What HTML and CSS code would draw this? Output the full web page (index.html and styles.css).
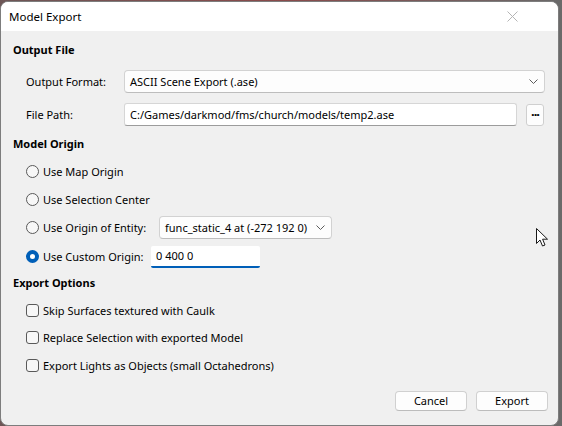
FILE: index.html
```html
<!DOCTYPE html>
<html>
<head>
<meta charset="utf-8">
<link rel="stylesheet" href="styles.css">
</head>
<body>
<div class="window">
  <div class="titlebar">
    <span class="title">Model Export</span>
    <svg class="close" width="11" height="11" viewBox="0 0 11 11"><path d="M0.5 0.5 L10.5 10.5 M10.5 0.5 L0.5 10.5" stroke="#b5b5b5" stroke-width="1" fill="none"/></svg>
  </div>
  <div class="content">
    <div class="section-title">Output File</div>
    <div class="field-row first">
      <span class="label">Output Format:</span>
      <div class="combo wide"><span>ASCII Scene Export (.ase)</span><svg class="chev" width="9" height="5" viewBox="0 0 9 5"><path d="M0.5 0.5 L4.5 4.5 L8.5 0.5" stroke="#5c5c5c" fill="none"/></svg></div>
    </div>
    <div class="field-row second">
      <span class="label">File Path:</span>
      <div class="textbox path">C:/Games/darkmod/fms/church/models/temp2.ase</div>
      <div class="dots">···</div>
    </div>

    <div class="section-title origin-title">Model Origin</div>
    <div class="opt r1"><span class="radio"></span><span>Use Map Origin</span></div>
    <div class="opt r2"><span class="radio"></span><span>Use Selection Center</span></div>
    <div class="opt r3"><span class="radio"></span><span class="olabel entity-label">Use Origin of Entity:</span>
      <div class="combo entity"><span>func_static_4 at (-272 192 0)</span><svg class="chev" width="9" height="5" viewBox="0 0 9 5"><path d="M0.5 0.5 L4.5 4.5 L8.5 0.5" stroke="#5c5c5c" fill="none"/></svg></div>
    </div>
    <div class="opt r4"><span class="radio checked"></span><span class="olabel custom-label">Use Custom Origin:</span>
      <div class="textbox custom">0 400 0</div>
    </div>

    <div class="section-title export-title">Export Options</div>
    <div class="opt c1"><span class="check"></span><span>Skip Surfaces textured with Caulk</span></div>
    <div class="opt c2"><span class="check"></span><span>Replace Selection with exported Model</span></div>
    <div class="opt c3"><span class="check"></span><span>Export Lights as Objects (small Octahedrons)</span></div>

    <div class="buttons">
      <div class="btn">Cancel</div>
      <div class="btn">Export</div>
    </div>
  </div>
  <svg class="cursor" width="13" height="20" viewBox="0 0 13 20"><path d="M0.5 0.5 L0.5 15.5 L4 12 L6.5 18 L9 17 L6.6 11.2 L11.5 11.2 Z" fill="#fff" stroke="#1a1a1a" stroke-width="1" stroke-linejoin="round"/></svg>
</div>
</body>
</html>
```
FILE: styles.css
```css
html, body {
  margin: 0;
  padding: 0;
}
body {
  width: 562px;
  height: 426px;
  background: linear-gradient(90deg, #6d5656 0%, #8a4a4a 50%, #6a6a6a 100%);
  font-family: "Segoe UI", "Noto Sans", sans-serif;
  font-size: 11px;
  color: #000;
  overflow: hidden;
  white-space: nowrap;
}
.window {
  position: relative;
  margin-top: 1px;
  width: 557px;
  height: 423px;
  border: 1px solid #7d7d7d;
  border-radius: 8px;
  overflow: hidden;
  background: #f0f0f0;
  display: flex;
  flex-direction: column;
}
.titlebar {
  height: 29px;
  background: #fff;
  display: flex;
  align-items: center;
  justify-content: space-between;
  padding: 0 40px 0 8px;
  flex: none;
}
.title {
  font-size: 11.5px;
}
.close {
  display: block;
}
.content {
  flex: 1;
  display: flex;
  flex-direction: column;
  padding: 11px 13px 0 12px;
}
.section-title {
  font-weight: bold;
  height: 16px;
  line-height: 16px;
}
.field-row {
  display: flex;
  align-items: center;
  padding-left: 13px;
}
.field-row.first { margin-top: 12px; }
.field-row.second { margin-top: 10px; }
.label {
  width: 98px;
  flex: none;
}
.combo {
  height: 21px;
  background: #fdfdfd;
  border: 1px solid #d2d2d2;
  border-bottom-color: #bdbdbd;
  border-radius: 4px;
  display: flex;
  align-items: center;
  justify-content: space-between;
  padding: 0 6px 0 5px;
  box-sizing: content-box;
}
.combo.wide { width: 408px; }
.combo.entity { width: 160px; }
.chev { display: block; }
.textbox {
  height: 21px;
  line-height: 21px;
  background: #fff;
  border: 1px solid #d6d6d6;
  border-bottom-color: #9c9c9c;
  border-radius: 3px;
  padding: 0 5px;
}
.textbox.path {
  width: 381px;
}
.dots {
  margin-left: 9px;
  width: 16px;
  height: 20px;
  border: 1px solid #cfcfcf;
  border-radius: 3px;
  background: #fdfdfd;
  font-weight: bold;
  font-size: 13px;
  line-height: 18px;
  text-align: center;
  letter-spacing: -1px;
}
.origin-title { margin-top: 10px; }
.opt {
  display: flex;
  align-items: center;
  padding-left: 13px;
}
.olabel { flex: none; }
.entity-label { width: 116px; }
.custom-label { width: 108px; }
.r1 { margin-top: 5px; height: 28px; }
.r2 { height: 28px; }
.r3 { height: 29px; }
.r4 { height: 29px; }
.radio {
  width: 11px;
  height: 11px;
  border: 1px solid #595959;
  border-radius: 50%;
  margin-right: 4px;
  flex: none;
  background: #f7f7f7;
  box-sizing: content-box;
}
.radio.checked {
  width: 5px;
  height: 5px;
  border: 4px solid #005fb8;
  background: #fff;
}
.textbox.custom {
  width: 99px;
  height: 20px;
  line-height: 20px;
  border: none;
  border-bottom: 2px solid #005fb8;
  border-radius: 2px;
  padding: 0 5px;
}
.export-title { margin-top: 4px; }
.c1 { margin-top: 5px; height: 28px; }
.c2 { height: 27px; }
.c3 { height: 28px; }
.check {
  width: 11px;
  height: 11px;
  border: 1px solid #595959;
  border-radius: 3px;
  margin-right: 4px;
  background: #f7f7f7;
  flex: none;
}
.buttons {
  display: flex;
  justify-content: flex-end;
  gap: 9px;
  margin-top: 12px;
  margin-right: -3px;
}
.btn {
  width: 70px;
  height: 18px;
  line-height: 18px;
  text-align: center;
  background: #fdfdfd;
  border: 1px solid #d0d0d0;
  border-bottom-color: #bcbcbc;
  border-radius: 4px;
}
.cursor {
  position: absolute;
  left: 535px;
  top: 226px;
}
```
